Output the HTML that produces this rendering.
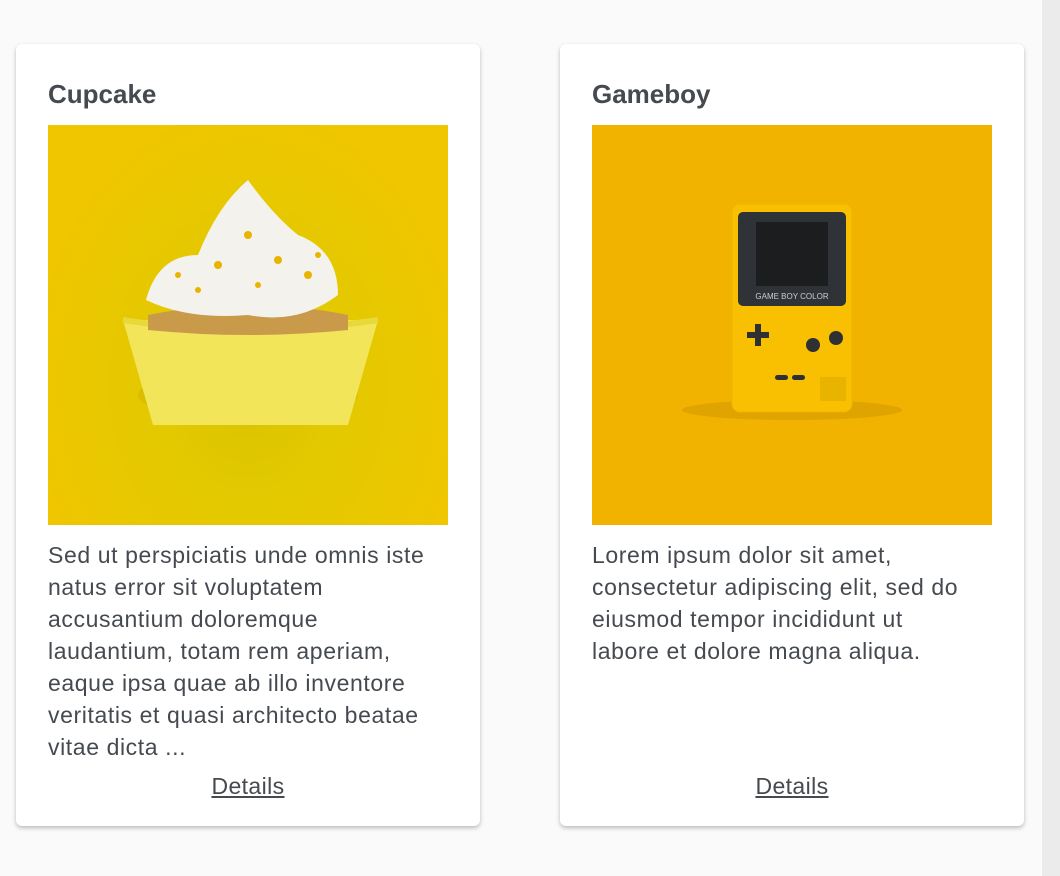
<!DOCTYPE html>
<html><head><style>
body{margin:0;background:#fafafa;width:1060px;height:876px;overflow:hidden;font-family:"Liberation Sans",sans-serif;color:#454a50;position:relative}
.sb{position:absolute;left:1042px;top:0;width:18px;height:876px;background:#ebebeb}
.card{position:absolute;top:44px;width:464px;height:782px;background:#fff;border-radius:6px;box-shadow:0 2px 4px rgba(0,0,0,.25)}
h2{position:absolute;left:32px;margin:0;font-size:26px;font-weight:bold;line-height:1;top:37px}
.img{position:absolute;left:32px;top:81px;width:400px;height:400px;overflow:hidden}
.txt{position:absolute;left:32px;top:495px;font-size:23px;letter-spacing:.6px;line-height:32px;white-space:nowrap}
.det{position:absolute;left:0;width:464px;text-align:center;top:729px;font-size:23px;letter-spacing:.4px;text-decoration:underline;color:#454a50}
</style></head><body>
<div class="sb"></div>
<div class="card" style="left:16px">
<h2>Cupcake</h2>
<div class="img" style="background:radial-gradient(ellipse at 50% 65%,#d9c200 0,#e2c900 30%,#f0c600 80%)">
<svg width="400" height="400">
<ellipse cx="200" cy="270" rx="110" ry="25" fill="#d6b800" opacity=".7"/>
<path d="M75 195 L330 195 L300 300 L105 300 Z" fill="#f2e55a"/>
<path d="M75 195 Q200 215 330 195" fill="none" stroke="#e8d83a" stroke-width="6"/>
<path d="M100 190 Q200 170 300 190 L300 205 Q200 215 100 205Z" fill="#c99a4a"/>
<path d="M98 175 Q110 130 150 130 Q170 80 200 55 Q225 90 250 110 Q290 125 290 170 Q250 200 200 190 Q140 195 98 175Z" fill="#f4f2ec"/>
<circle cx="200" cy="110" r="4" fill="#e8b400"/><circle cx="170" cy="140" r="4" fill="#e8b400"/><circle cx="230" cy="135" r="4" fill="#e8b400"/><circle cx="130" cy="150" r="3" fill="#e8b400"/><circle cx="260" cy="150" r="4" fill="#e8b400"/><circle cx="210" cy="160" r="3" fill="#e8b400"/><circle cx="150" cy="165" r="3" fill="#e8b400"/><circle cx="270" cy="130" r="3" fill="#e8b400"/>
</svg></div>
<div class="txt">Sed ut perspiciatis unde omnis iste<br>natus error sit voluptatem<br>accusantium doloremque<br>laudantium, totam rem aperiam,<br>eaque ipsa quae ab illo inventore<br>veritatis et quasi architecto beatae<br>vitae dicta ...</div>
<div class="det">Details</div>
</div>
<div class="card" style="left:560px">
<h2>Gameboy</h2>
<div class="img" style="background:#f2b200">
<svg width="400" height="400">
<ellipse cx="200" cy="285" rx="110" ry="10" fill="#e0a400"/>
<rect x="140" y="79" width="120" height="208" rx="8" fill="#f8c000" stroke="#eab600"/>
<rect x="146" y="87" width="108" height="94" rx="5" fill="#2f3338"/>
<rect x="164" y="97" width="72" height="64" fill="#1c1d1f"/>
<text x="200" y="174" font-size="8" fill="#ccc" text-anchor="middle" font-family="Liberation Sans">GAME BOY COLOR</text>
<path d="M155 207h8v-8h6v8h8v6h-8v8h-6v-8h-8z" fill="#2e3034"/>
<circle cx="221" cy="220" r="7" fill="#2e3034"/><circle cx="244" cy="213" r="7" fill="#2e3034"/>
<rect x="183" y="250" width="13" height="5" rx="2.5" fill="#2e3034"/><rect x="200" y="250" width="13" height="5" rx="2.5" fill="#2e3034"/>
<rect x="228" y="252" width="26" height="24" fill="#e0ab00" opacity=".6"/>
</svg></div>
<div class="txt">Lorem ipsum dolor sit amet,<br>consectetur adipiscing elit, sed do<br>eiusmod tempor incididunt ut<br>labore et dolore magna aliqua.</div>
<div class="det">Details</div>
</div>
</body></html>
